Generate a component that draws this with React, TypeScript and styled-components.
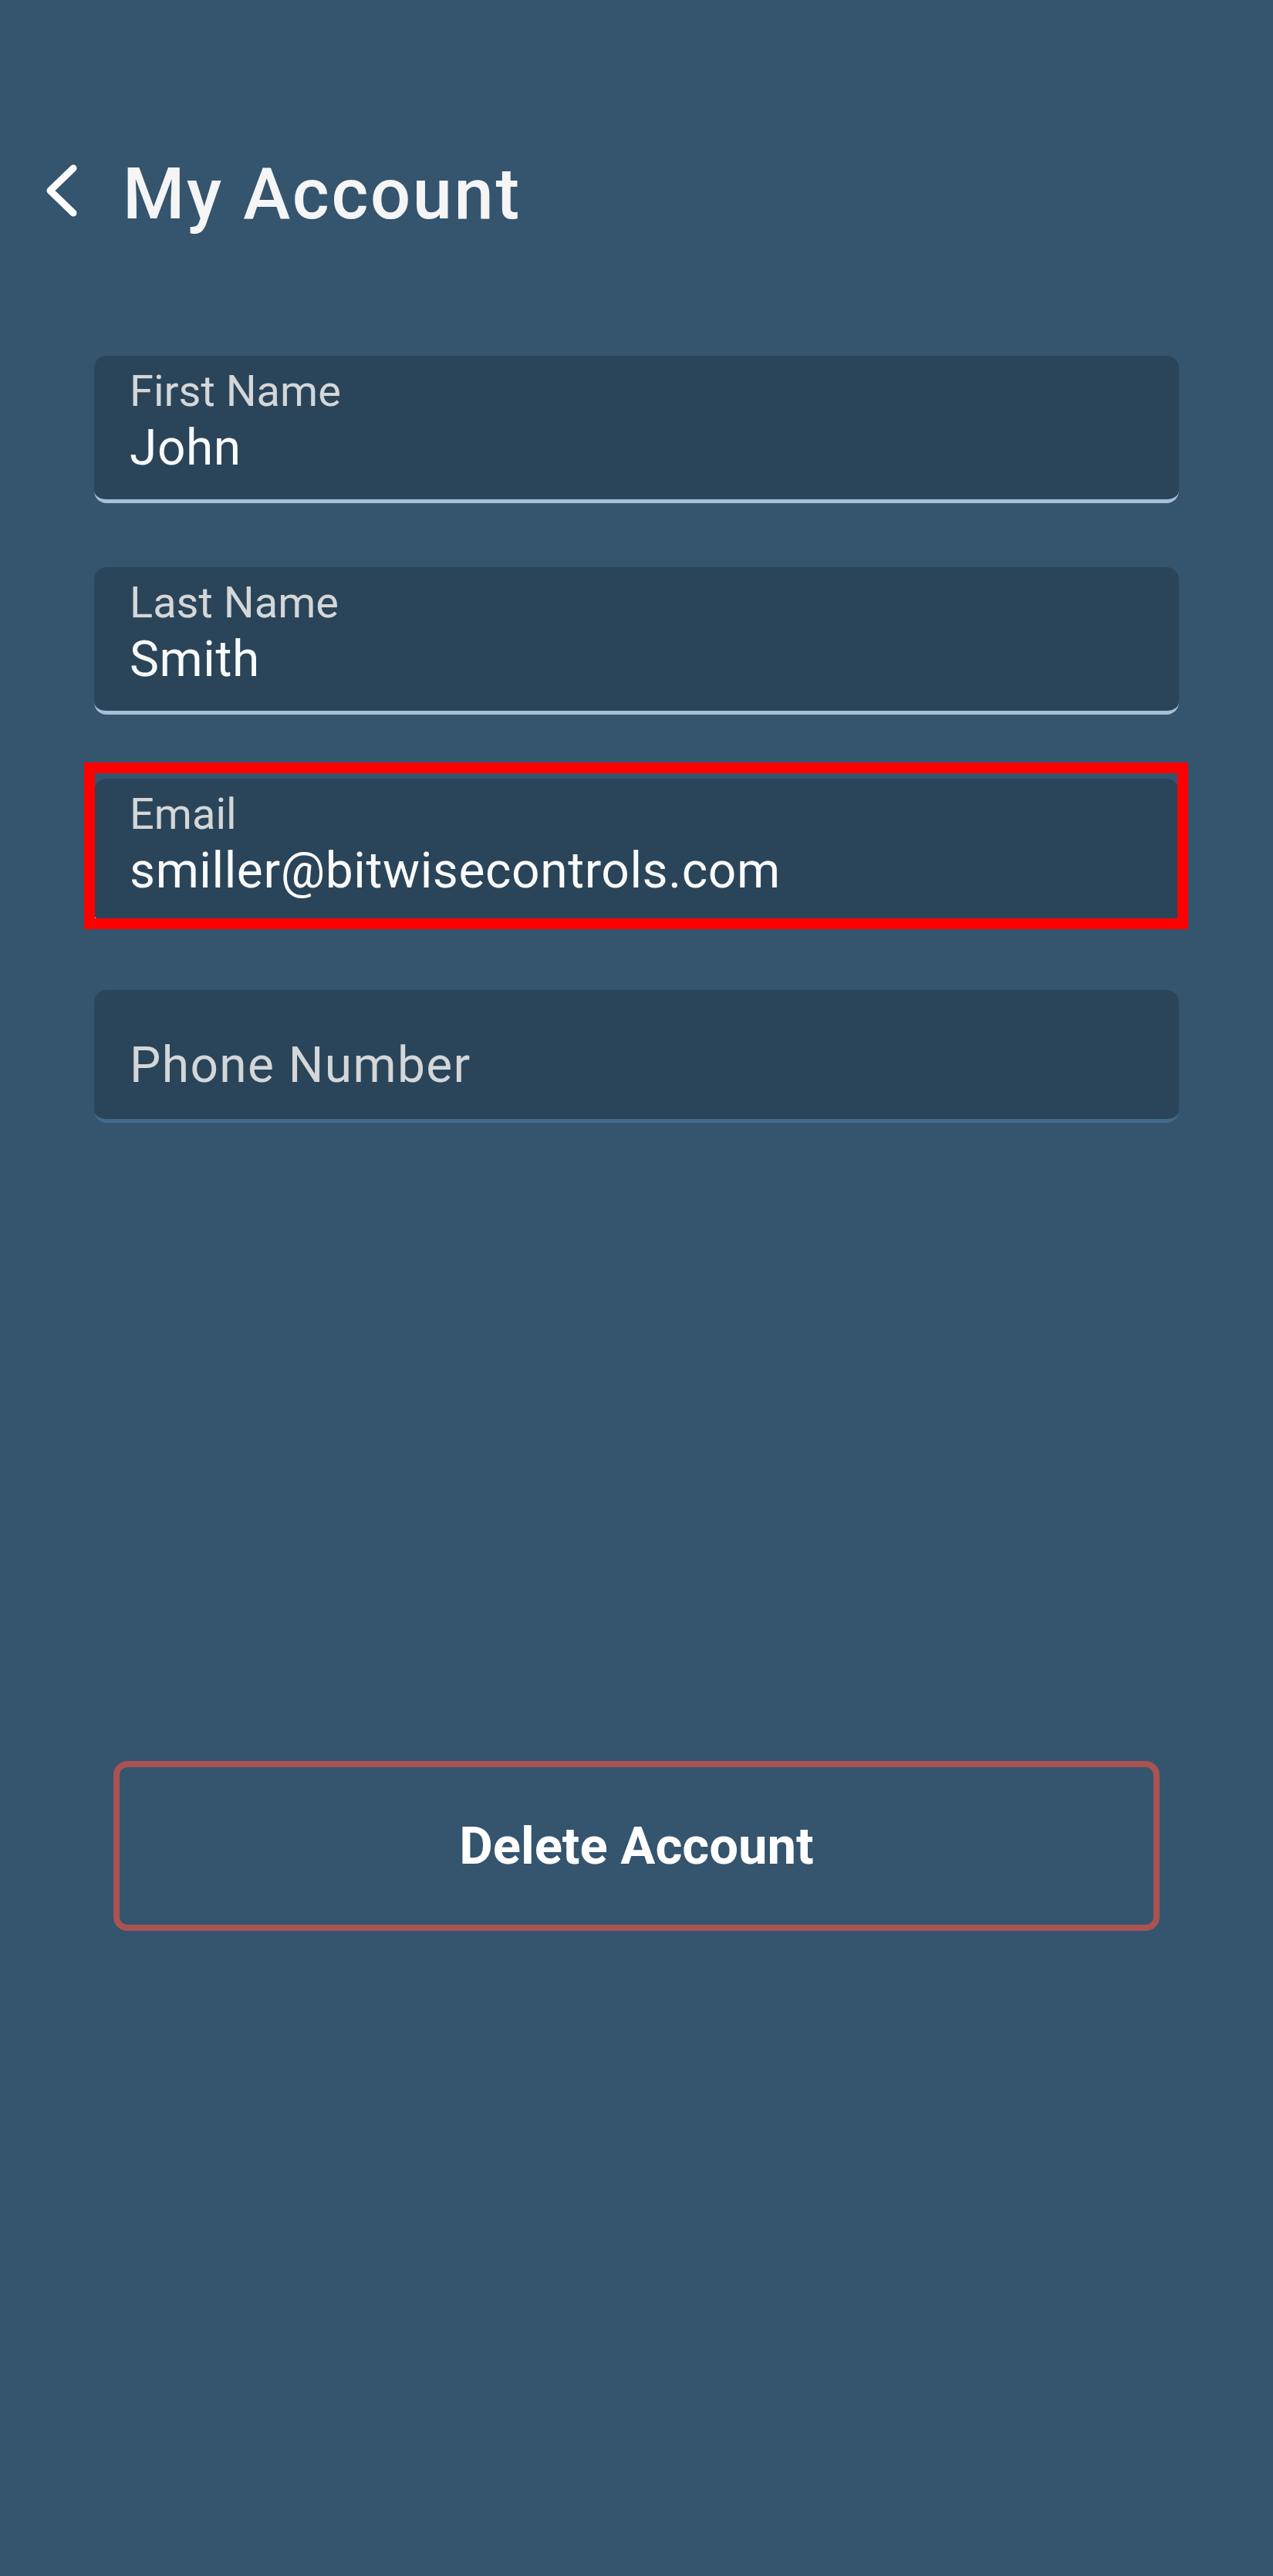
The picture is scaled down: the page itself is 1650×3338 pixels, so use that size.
import React from "react";
import styled, { createGlobalStyle } from "styled-components";

const GlobalStyle = createGlobalStyle`
  html, body {
    margin: 0;
    padding: 0;
    background: #35546e;
  }
  body {
    font-family: Roboto, "Noto Sans", "Liberation Sans", sans-serif;
  }
  * { box-sizing: border-box; }
`;

const Screen = styled.div`
  min-height: 3338px;
  background: #35546e;
  display: flex;
  flex-direction: column;
`;

const Header = styled.header`
  display: flex;
  align-items: center;
  padding: 202px 0 0 56px;
  height: 302px;
  gap: 53px;
`;

const BackButton = styled.button`
  display: flex;
  padding: 0;
  border: none;
  background: transparent;
  cursor: pointer;
  width: 50px;
  height: 100px;
`;

const Title = styled.h1`
  margin: 0;
  font-family: Roboto, "Noto Sans", sans-serif;
  font-weight: 500;
  font-size: 92px;
  line-height: 100px;
  letter-spacing: 2.6px;
  color: #f5f5f5;
`;

const Form = styled.form`
  display: flex;
  flex-direction: column;
  gap: 83px;
  margin-top: 159px;
  padding: 0 122px;
`;

const Field = styled.div<{ $height: number; $line: string; $padTop: number }>`
  position: relative;
  display: flex;
  flex-direction: column;
  height: ${(p) => p.$height}px;
  padding: ${(p) => p.$padTop}px 46px 0;
  background: #2a4559;
  border-radius: 16px;
  border-bottom: 5px solid ${(p) => p.$line};
`;

const Label = styled.span`
  font-size: 56px;
  line-height: 56px;
  color: #d4d6d8;
  font-weight: 400;
`;

const Value = styled.span<{ $placeholder?: boolean }>`
  margin-top: ${(p) => (p.$placeholder ? 0 : 14)}px;
  font-size: 64px;
  line-height: 64px;
  letter-spacing: ${(p) => (p.$placeholder ? 1.4 : 0.6)}px;
  color: ${(p) => (p.$placeholder ? "#d4d6d8" : "#fafafa")};
  font-weight: 400;
`;

const Highlight = styled.div`
  position: absolute;
  top: -21px;
  left: -13px;
  right: -12px;
  bottom: -9px;
  border: 14px solid #ff0000;
  pointer-events: none;
`;

const ButtonRow = styled.div`
  display: flex;
  padding: 0 147px;
  margin-top: 827px;
`;

const DeleteButton = styled.button`
  flex: 1;
  height: 220px;
  display: flex;
  align-items: center;
  justify-content: center;
  background: transparent;
  border: 8px solid #a95353;
  border-radius: 18px;
  color: #ffffff;
  font-family: Roboto, "Noto Sans", sans-serif;
  font-weight: 700;
  font-size: 67px;
  cursor: pointer;
`;

type FieldProps = {
  label?: string;
  value?: string;
  placeholder?: string;
  highlighted?: boolean;
};

const TextField: React.FC<FieldProps> = ({ label, value, placeholder, highlighted }) => {
  if (placeholder) {
    return (
      <Field $height={172} $line="#3f6a8d" $padTop={66}>
        <Value $placeholder>{placeholder}</Value>
      </Field>
    );
  }
  return (
    <Field $height={191} $line="#a6c0d7" $padTop={18}>
      <Label>{label}</Label>
      <Value>{value}</Value>
      {highlighted && <Highlight />}
    </Field>
  );
};

export default function App() {
  return (
    <>
      <GlobalStyle />
      <Screen>
        <Header>
          <BackButton aria-label="Back">
            <svg width="50" height="100" viewBox="0 0 50 100" fill="none">
              <polyline
                points="39,16 9,45 39,74"
                stroke="#ffffff"
                strokeWidth="9"
                strokeLinecap="round"
                strokeLinejoin="round"
              />
            </svg>
          </BackButton>
          <Title>My Account</Title>
        </Header>
        <Form onSubmit={(e) => e.preventDefault()}>
          <TextField label="First Name" value="John" />
          <TextField label="Last Name" value="Smith" />
          <TextField label="Email" value="smiller@bitwisecontrols.com" highlighted />
          <TextField placeholder="Phone Number" />
        </Form>
        <ButtonRow>
          <DeleteButton type="button">Delete Account</DeleteButton>
        </ButtonRow>
      </Screen>
    </>
  );
}
